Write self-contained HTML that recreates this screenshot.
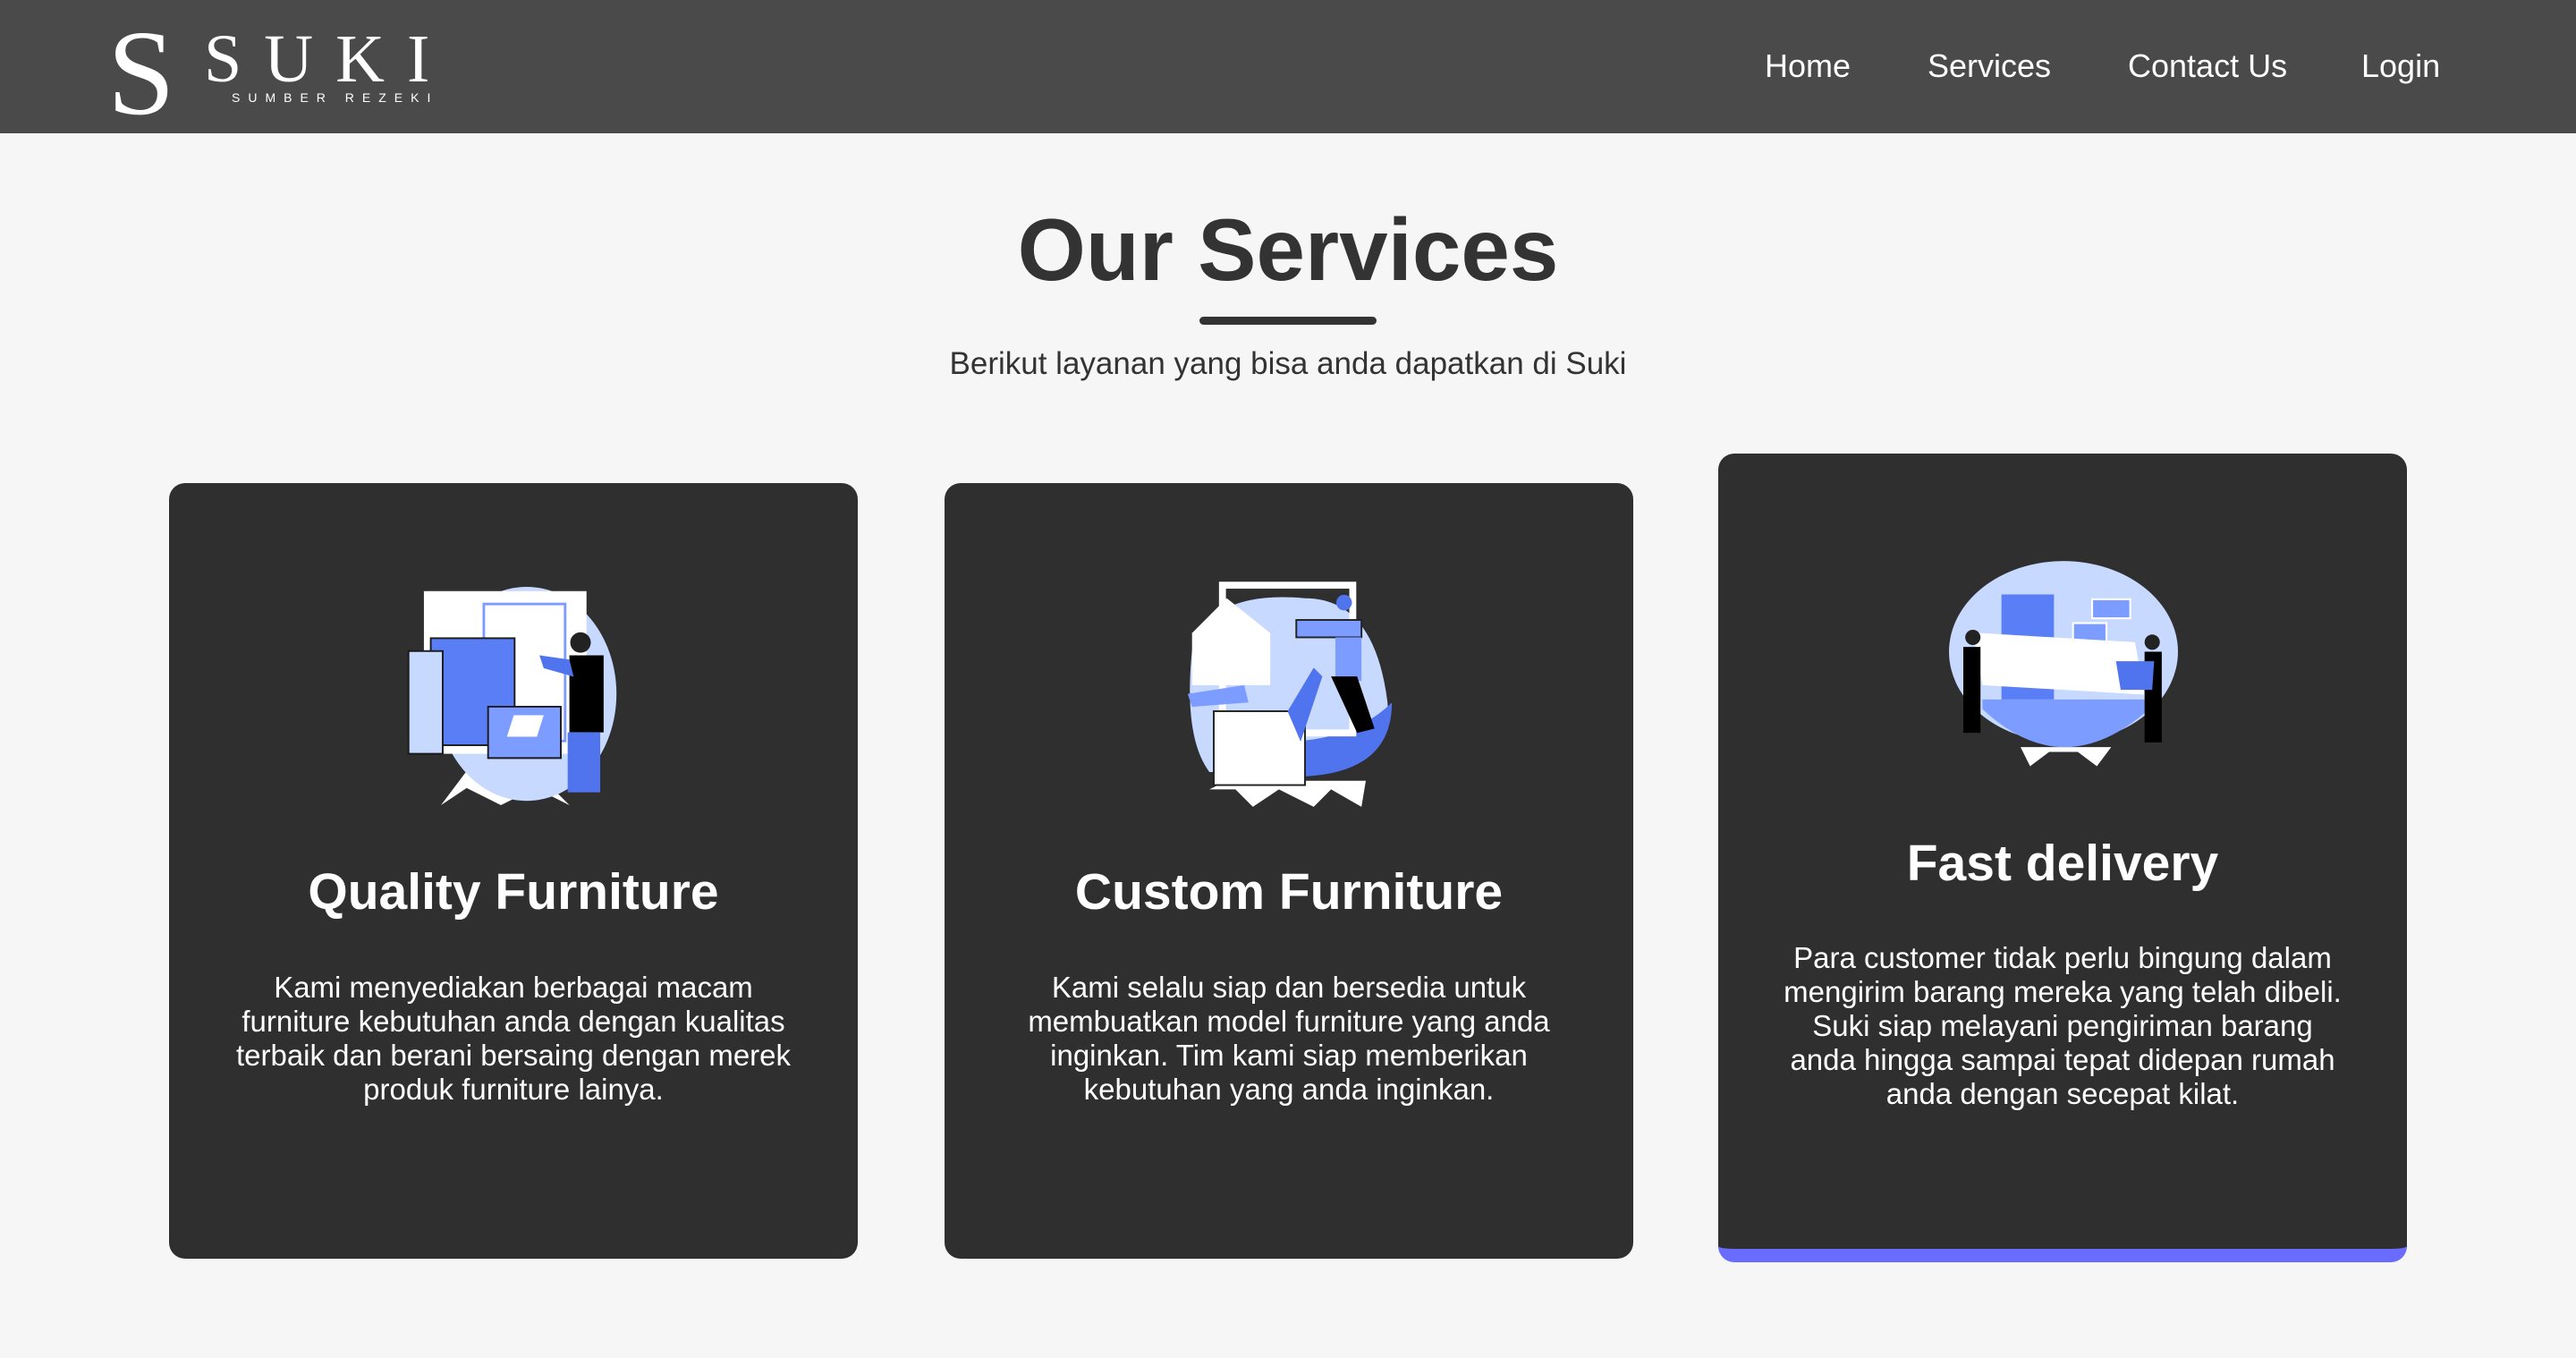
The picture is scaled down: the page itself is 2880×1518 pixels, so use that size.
<!DOCTYPE html>
<html><head><meta charset="utf-8"><style>
*{margin:0;padding:0;box-sizing:border-box}
html,body{width:2880px;height:1518px;overflow:hidden;background:#f6f6f6;font-family:"Liberation Sans",Arial,sans-serif}
.hdr{position:absolute;left:0;top:0;width:2880px;height:149px;background:#4a4a4a}
.logoS{position:absolute;left:120px;top:14px;font-family:"Liberation Serif",serif;font-size:136px;line-height:1;color:#fff}
.suki{position:absolute;left:228px;top:28px;font-family:"Liberation Serif",serif;font-size:76px;color:#fff;letter-spacing:25px;line-height:1}
.sub{position:absolute;left:259px;top:101px;font-size:14px;color:#fff;letter-spacing:9px}
.nav{position:absolute;top:53px;font-size:36px;color:#fff}
h1{position:absolute;left:0;width:2880px;top:226px;text-align:center;font-size:98px;font-weight:bold;color:#333;line-height:1.1}
.bar{position:absolute;left:1341px;top:354px;width:198px;height:9px;border-radius:5px;background:#333}
.subt{position:absolute;left:0;width:2880px;top:387px;text-align:center;font-size:35px;color:#333}
.card{position:absolute;width:770px;background:#2f2f2f;border-radius:18px;overflow:hidden;color:#fff;text-align:center}
.card h2{position:absolute;left:0;width:100%;font-size:57px;font-weight:bold}
.card p{position:absolute;left:0;right:0;font-size:33px;line-height:38px;white-space:nowrap}
.card svg{position:absolute}
</style></head><body>
<div class="hdr">
  <div class="logoS">S</div>
  <div class="suki">SUKI</div>
  <div class="sub">SUMBER REZEKI</div>
  <div class="nav" style="left:1973px">Home</div>
  <div class="nav" style="left:2155px">Services</div>
  <div class="nav" style="left:2379px">Contact Us</div>
  <div class="nav" style="left:2640px">Login</div>
</div>
<h1>Our Services</h1>
<div class="bar"></div>
<div class="subt">Berikut layanan yang bisa anda dapatkan di Suki</div>

<div class="card" style="left:189px;top:540px;height:867px">
  <svg style="left:261px;top:107px" width="244" height="262" viewBox="45 30 255 265">
    <path d="M90 290 L120 250 L200 250 L240 290 L200 270 L160 290 L120 270Z" fill="#fff"/>
    <ellipse cx="190" cy="160" rx="105" ry="125" fill="#c7d9ff"/>
    <rect x="70" y="40" width="190" height="190" fill="#fff"/>
    <rect x="140" y="55" width="95" height="160" fill="none" stroke="#7d9cff" stroke-width="3"/>
    <rect x="78" y="95" width="98" height="125" fill="#5a7ef5" stroke="#1a1a1a" stroke-width="2"/>
    <rect x="52" y="110" width="40" height="120" fill="#c7d9ff" stroke="#1a1a1a" stroke-width="2"/>
    <path d="M145 175 h85 v60 h-85z" fill="#7d9cff" stroke="#1a1a1a" stroke-width="2"/>
    <path d="M175 185 l35 0 l-8 25 h-35z" fill="#fff"/>
    <rect x="240" y="115" width="40" height="90" fill="#000"/>
    <rect x="238" y="205" width="38" height="70" fill="#4f74ee"/>
    <circle cx="253" cy="100" r="12" fill="#222"/>
    <path d="M240 120 L205 115 L210 130 L245 140z" fill="#4f74ee"/>
  </svg>
  <h2 style="top:424px">Quality Furniture</h2>
  <p style="top:545px">Kami menyediakan berbagai macam<br>furniture kebutuhan anda dengan kualitas<br>terbaik dan berani bersaing dengan merek<br>produk furniture lainya.</p>
</div>

<div class="card" style="left:1056px;top:540px;height:867px">
  <svg style="left:267px;top:107px" width="238" height="262" viewBox="10 20 245 265">
    <path d="M40 260 L60 250 L220 250 L215 280 L180 260 L160 280 L120 260 L90 280 L70 260Z" fill="#fff"/>
    <path d="M20 100 Q40 30 150 40 Q230 40 245 160 Q250 240 150 240 L40 240 Q10 200 20 100z" fill="#c7d9ff"/>
    <path d="M100 205 Q200 210 250 160 Q250 240 150 245 L100 245z" fill="#4f74ee"/>
    <rect x="55" y="25" width="150" height="170" fill="none" stroke="#fff" stroke-width="8"/>
    <path d="M20 80 L60 40 L110 80 V140 H20Z" fill="#fff"/>
    <rect x="45" y="170" width="105" height="85" fill="#fff" stroke="#222" stroke-width="2"/>
    <rect x="140" y="65" width="75" height="20" fill="#7d9cff" stroke="#222" stroke-width="2"/>
    <rect x="185" y="85" width="30" height="50" fill="#7d9cff"/>
    <path d="M180 130 L210 130 L230 190 L210 195z" fill="#000"/>
    <circle cx="195" cy="45" r="9" fill="#4f74ee"/>
    <path d="M15 150 L80 140 L85 160 L20 165z" fill="#7d9cff"/>
    <path d="M130 170 L160 120 L170 130 L145 205z" fill="#4f74ee"/>
  </svg>
  <h2 style="top:424px">Custom Furniture</h2>
  <p style="top:545px">Kami selalu siap dan bersedia untuk<br>membuatkan model furniture yang anda<br>inginkan. Tim kami siap memberikan<br>kebutuhan yang anda inginkan.</p>
</div>

<div class="card" style="left:1921px;top:507px;height:904px;border-bottom:15px solid #6a6cff">
  <svg style="left:258px;top:106px" width="256" height="263" viewBox="5 5 240 220">
    <path d="M80 200 L90 220 L110 205 L140 205 L160 220 L175 200Z" fill="#fff"/>
    <ellipse cx="125" cy="100" rx="120" ry="95" fill="#c7d9ff"/>
    <path d="M40 160 Q125 240 215 160 L215 150 L40 150z" fill="#7d9cff"/>
    <rect x="60" y="40" width="55" height="110" fill="#5a7ef5"/>
    <rect x="155" y="45" width="40" height="20" fill="#7d9cff" stroke="#fff" stroke-width="2"/>
    <rect x="135" y="70" width="35" height="20" fill="#7d9cff" stroke="#fff" stroke-width="2"/>
    <path d="M30 80 L200 90 L210 145 L40 135z" fill="#fff"/>
    <rect x="20" y="95" width="18" height="90" fill="#000"/>
    <rect x="210" y="100" width="18" height="95" fill="#000"/>
    <circle cx="30" cy="85" r="8" fill="#222"/>
    <circle cx="218" cy="90" r="8" fill="#222"/>
    <path d="M180 110 L220 110 L218 140 L185 140z" fill="#4f74ee"/>
  </svg>
  <h2 style="top:425px">Fast delivery</h2>
  <p style="top:545px">Para customer tidak perlu bingung dalam<br>mengirim barang mereka yang telah dibeli.<br>Suki siap melayani pengiriman barang<br>anda hingga sampai tepat didepan rumah<br>anda dengan secepat kilat.</p>
</div>
</body></html>
